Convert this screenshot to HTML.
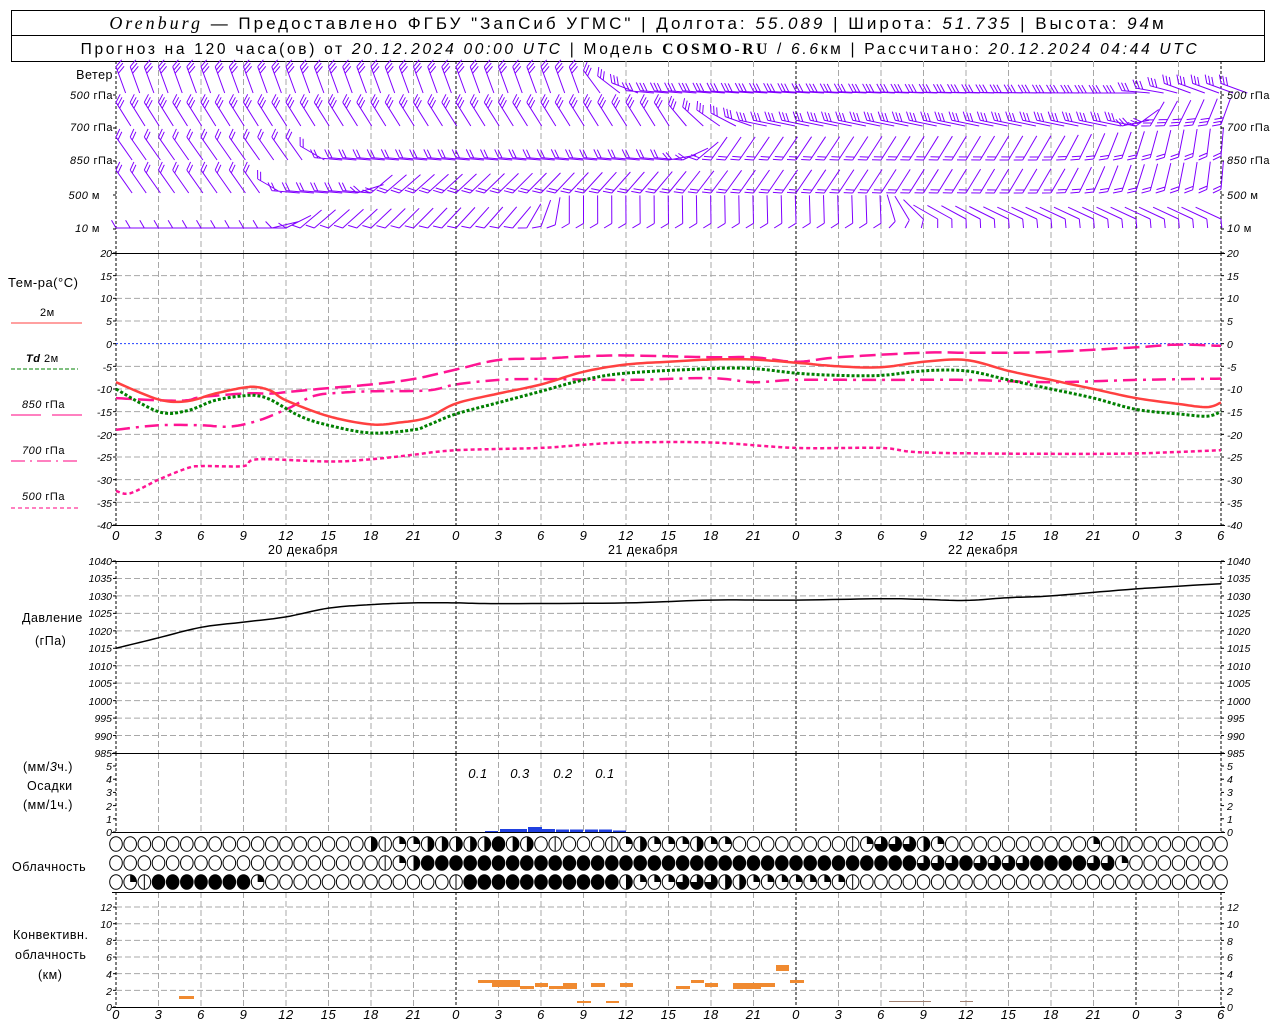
<!DOCTYPE html>
<html><head><meta charset="utf-8">
<style>
html,body{margin:0;padding:0;background:#fff;width:1280px;height:1024px;overflow:hidden}
svg{display:block}
text{font-family:"Liberation Sans","DejaVu Sans",sans-serif;fill:#000}
.t{font-size:12.5px;letter-spacing:0.5px}
.n{font-size:10.5px;font-style:italic}
.ax{font-size:13px;font-style:italic;letter-spacing:0.5px}
.hd{font-size:17px;letter-spacing:3px}
.hd2{font-size:15.5px;letter-spacing:2.7px}
.i{font-style:italic}
</style></head><body>
<svg id="s" width="1280" height="1024" xmlns="http://www.w3.org/2000/svg">
<rect x="0" y="0" width="1280" height="1024" fill="#fff"/>
<rect x="11.5" y="10.5" width="1253" height="51" fill="none" stroke="#000"/>
<line x1="11" y1="35.5" x2="1265" y2="35.5" stroke="#000"/>
<text class="hd" x="638" y="29" text-anchor="middle"><tspan font-family="Liberation Serif" font-style="italic" font-size="18">Orenburg</tspan> — Предоставлено ФГБУ "ЗапСиб УГМС" | Долгота: <tspan class="i">55.089</tspan> | Широта: <tspan class="i">51.735</tspan> | Высота: <tspan class="i">94</tspan>м</text>
<text class="hd2" x="640" y="54" text-anchor="middle">Прогноз на 120 часа(ов) от <tspan class="i">20.12.2024 00:00 UTC</tspan>  | Модель <tspan font-weight="bold" font-family="Liberation Serif">COSMO-RU</tspan> / <tspan class="i">6.6</tspan>км | Рассчитано: <tspan class="i">20.12.2024 04:44 UTC</tspan></text>

<g id="grid"></g>
<g id="data"></g>

<g class="t" text-anchor="end">
<text x="113" y="79">Ветер</text>
<text x="113" y="99" font-size="11"><tspan class="i">500</tspan> гПа</text>
<text x="113" y="131" font-size="11"><tspan class="i">700</tspan> гПа</text>
<text x="113" y="164" font-size="11"><tspan class="i">850</tspan> гПа</text>
<text x="100" y="199" font-size="11"><tspan class="i">500</tspan> м</text>
<text x="100" y="232" font-size="11"><tspan class="i">10</tspan>   м</text>
</g>
<g class="t" font-size="11">
<text x="1227" y="99" font-size="11"><tspan class="i">500</tspan> гПа</text>
<text x="1227" y="131" font-size="11"><tspan class="i">700</tspan> гПа</text>
<text x="1227" y="164" font-size="11"><tspan class="i">850</tspan> гПа</text>
<text x="1227" y="199" font-size="11"><tspan class="i">500</tspan>  м</text>
<text x="1227" y="232" font-size="11"><tspan class="i">10</tspan>   м</text>
</g>

<g class="t">
<text x="8" y="287" font-size="13">Тем-ра(°С)</text>
<text x="40" y="316" font-size="11">2м</text>
<line x1="11" y1="323" x2="82" y2="323" stroke="#ff4040"/>
<text x="26" y="362" font-size="11"><tspan class="i" font-weight="bold">Td</tspan>  2м</text>
<line x1="11" y1="369" x2="78" y2="369" stroke="#008000" stroke-dasharray="4,2"/>
<text x="22" y="408" font-size="11"><tspan class="i">850</tspan>  гПа</text>
<line x1="11" y1="415" x2="41" y2="415" stroke="#ff0080"/><line x1="52" y1="415" x2="82" y2="415" stroke="#ff0080"/>
<text x="22" y="454" font-size="11"><tspan class="i">700</tspan>  гПа</text>
<line x1="11" y1="461" x2="78" y2="461" stroke="#ff0080" stroke-dasharray="14,5,2,5"/>
<text x="22" y="500" font-size="11"><tspan class="i">500</tspan>  гПа</text>
<line x1="11" y1="508" x2="78" y2="508" stroke="#ff0080" stroke-dasharray="4,3"/>
<text x="22" y="622">Давление</text>
<text x="35" y="645">(гПа)</text>
<text x="23" y="771">(мм/<tspan class="i">3</tspan>ч.)</text>
<text x="27" y="790">Осадки</text>
<text x="23" y="809">(мм/1ч.)</text>
<text x="12" y="871">Облачность</text>
<text x="13" y="939">Конвективн.</text>
<text x="15" y="959">облачность</text>
<text x="38" y="979">(км)</text>
</g>

<g class="n" text-anchor="end">
<text x="112" y="257">20</text><text x="112" y="280">15</text><text x="112" y="302">10</text><text x="112" y="325">5</text><text x="112" y="348">0</text>
<text x="112" y="371">-5</text><text x="112" y="393">-10</text><text x="112" y="416">-15</text><text x="112" y="439">-20</text><text x="112" y="461">-25</text><text x="112" y="484">-30</text><text x="112" y="507">-35</text><text x="112" y="529">-40</text>
</g>
<g class="n">
<text x="1227" y="257">20</text><text x="1227" y="280">15</text><text x="1227" y="302">10</text><text x="1227" y="325">5</text><text x="1227" y="348">0</text><text x="1227" y="371">-5</text><text x="1227" y="393">-10</text><text x="1227" y="416">-15</text><text x="1227" y="439">-20</text><text x="1227" y="461">-25</text><text x="1227" y="484">-30</text><text x="1227" y="507">-35</text><text x="1227" y="529">-40</text>
</g>
<g class="n" text-anchor="end" font-size="9.5">
<text x="112" y="565">1040</text><text x="112" y="582">1035</text><text x="112" y="600">1030</text><text x="112" y="617">1025</text><text x="112" y="635">1020</text><text x="112" y="652">1015</text><text x="112" y="670">1010</text><text x="112" y="687">1005</text><text x="112" y="705">1000</text><text x="112" y="722">995</text><text x="112" y="740">990</text><text x="112" y="757">985</text>
<text x="112" y="770">5</text><text x="112" y="783">4</text><text x="112" y="796">3</text><text x="112" y="810">2</text><text x="112" y="823">1</text><text x="112" y="836">0</text>
<text x="112" y="911">12</text><text x="112" y="928">10</text><text x="112" y="945">8</text><text x="112" y="961">6</text><text x="112" y="978">4</text><text x="112" y="995">2</text><text x="112" y="1011">0</text>
</g>
<g class="n" font-size="9.5">
<text x="1227" y="565">1040</text><text x="1227" y="582">1035</text><text x="1227" y="600">1030</text><text x="1227" y="617">1025</text><text x="1227" y="635">1020</text><text x="1227" y="652">1015</text><text x="1227" y="670">1010</text><text x="1227" y="687">1005</text><text x="1227" y="705">1000</text><text x="1227" y="722">995</text><text x="1227" y="740">990</text><text x="1227" y="757">985</text>
<text x="1227" y="770">5</text><text x="1227" y="783">4</text><text x="1227" y="796">3</text><text x="1227" y="810">2</text><text x="1227" y="823">1</text><text x="1227" y="836">0</text>
<text x="1227" y="911">12</text><text x="1227" y="928">10</text><text x="1227" y="945">8</text><text x="1227" y="961">6</text><text x="1227" y="978">4</text><text x="1227" y="995">2</text><text x="1227" y="1011">0</text>
</g>
<g class="ax" text-anchor="middle">
<text x="116" y="540">0</text><text x="158.5" y="540">3</text><text x="201" y="540">6</text><text x="243.5" y="540">9</text><text x="286" y="540">12</text><text x="328.5" y="540">15</text><text x="371" y="540">18</text><text x="413.5" y="540">21</text><text x="456" y="540">0</text><text x="498.5" y="540">3</text><text x="541" y="540">6</text><text x="583.5" y="540">9</text><text x="626" y="540">12</text><text x="668.5" y="540">15</text><text x="711" y="540">18</text><text x="753.5" y="540">21</text><text x="796" y="540">0</text><text x="838.5" y="540">3</text><text x="881" y="540">6</text><text x="923.5" y="540">9</text><text x="966" y="540">12</text><text x="1008.5" y="540">15</text><text x="1051" y="540">18</text><text x="1093.5" y="540">21</text><text x="1136" y="540">0</text><text x="1178.5" y="540">3</text><text x="1221" y="540">6</text>
<text x="116" y="1019">0</text><text x="158.5" y="1019">3</text><text x="201" y="1019">6</text><text x="243.5" y="1019">9</text><text x="286" y="1019">12</text><text x="328.5" y="1019">15</text><text x="371" y="1019">18</text><text x="413.5" y="1019">21</text><text x="456" y="1019">0</text><text x="498.5" y="1019">3</text><text x="541" y="1019">6</text><text x="583.5" y="1019">9</text><text x="626" y="1019">12</text><text x="668.5" y="1019">15</text><text x="711" y="1019">18</text><text x="753.5" y="1019">21</text><text x="796" y="1019">0</text><text x="838.5" y="1019">3</text><text x="881" y="1019">6</text><text x="923.5" y="1019">9</text><text x="966" y="1019">12</text><text x="1008.5" y="1019">15</text><text x="1051" y="1019">18</text><text x="1093.5" y="1019">21</text><text x="1136" y="1019">0</text><text x="1178.5" y="1019">3</text><text x="1221" y="1019">6</text>
</g>
<g class="t" font-size="13" text-anchor="middle">
<text x="303" y="554">20 декабря</text><text x="643" y="554">21 декабря</text><text x="983" y="554">22 декабря</text>
</g>
<g class="ax" text-anchor="middle" font-size="12">
<text x="478" y="778">0.1</text><text x="520" y="778">0.3</text><text x="563" y="778">0.2</text><text x="605" y="778">0.1</text>
</g>
</svg>
<script>
(function(){
var NS="http://www.w3.org/2000/svg";
var G=document.getElementById('grid'),D=document.getElementById('data');
function el(p,tag,a){var e=document.createElementNS(NS,tag);for(var k in a)e.setAttribute(k,a[k]);p.appendChild(e);return e;}
function X(h){return 116+h*1105/78;}
function TY(t){return 253+(20-t)*272/60;}
function PY(p){return 561+(1040-p)*192/55;}
function R(c,n){var s='';for(var i=0;i<n;i++)s+=c;return s;}
var panels=[[61,253],[253,525],[561,753],[753,832],[892,1007]];
for(var t=15;t>=-35;t-=5){if(t==0)continue;el(G,'line',{x1:116,x2:1221,y1:TY(t),y2:TY(t),stroke:'#a8a8a8','stroke-dasharray':'6,3'});}
for(var p=1035;p>=990;p-=5)el(G,'line',{x1:116,x2:1221,y1:PY(p),y2:PY(p),stroke:'#a8a8a8','stroke-dasharray':'6,3'});
for(var c=2;c<=12;c+=2){var y=1007-c*8.33;el(G,'line',{x1:116,x2:1221,y1:y,y2:y,stroke:'#a8a8a8','stroke-dasharray':'6,3'});}
for(var h=0;h<=78;h+=3){var x=X(h),day=(h%24==0)||h==78;
 panels.forEach(function(pp){el(G,'line',{x1:x,x2:x,y1:pp[0],y2:pp[1],stroke:day?'#000':'#a8a8a8','stroke-dasharray':day?'3,2':'6,3'});});}
[[253],[525],[561],[753],[832],[892],[1007]].forEach(function(a){el(G,'line',{x1:112,x2:1225,y1:a[0]+0.5,y2:a[0]+0.5,stroke:'#000'});});
el(G,'line',{x1:116,x2:1221,y1:TY(0),y2:TY(0),stroke:'#2040ff','stroke-dasharray':'2,2'});
function ticks(ys){ys.forEach(function(y){el(G,'line',{x1:113,x2:116,y1:y,y2:y,stroke:'#000'});el(G,'line',{x1:1221,x2:1224,y1:y,y2:y,stroke:'#000'});});}
var ty=[];for(var t=20;t>=-40;t-=5)ty.push(TY(t));ticks(ty);
ty=[];for(var p=1040;p>=985;p-=5)ty.push(PY(p));ticks(ty);
ty=[];for(var v=0;v<=5;v++)ty.push(832-v*13.2);ticks(ty);
ty=[];for(var v=0;v<=12;v+=2)ty.push(1007-v*8.33);ticks(ty);
ticks([95,128,161,195,229]);

function interp(kf,step){var pts=[];for(var i=0;i<kf.length-1;i++){var a=kf[i],b=kf[i+1];
 var p0=kf[Math.max(0,i-1)],p3=kf[Math.min(kf.length-1,i+2)];
 for(var s=0;s<1;s+=step){var t=s,t2=t*t,t3=t2*t;
  var f=function(k){return 0.5*((2*a[k])+(-p0[k]+b[k])*t+(2*p0[k]-5*a[k]+4*b[k]-p3[k])*t2+(-p0[k]+3*a[k]-3*b[k]+p3[k])*t3);};
  pts.push([f(0),f(1)]);}}
 pts.push(kf[kf.length-1]);return pts;}
function curve(kf,fy,attrs){var pts=interp(kf,0.1);var d='';pts.forEach(function(q,i){d+=(i?'L':'M')+X(q[0]).toFixed(1)+','+fy(q[1]).toFixed(1);});
 attrs.d=d;attrs.fill='none';el(D,'path',attrs);}
var T2=[[0,-8.5],[3,-12.3],[5,-12.7],[7,-11],[9,-9.7],[10,-9.6],[11,-10.5],[12,-12.5],[15,-16],[18,-17.8],[20,-17.4],[22,-16.3],[24,-13.2],[27,-11],[30,-9],[33,-6.2],[36,-4.6],[39,-4],[42,-3.5],[45,-3.5],[48,-4.2],[51,-5],[54,-5.2],[57,-4],[60,-3.6],[63,-6],[66,-8],[69,-10],[72,-12],[75,-13.3],[77,-14],[78,-13]];
var TD=[[0,-10],[3,-15],[5,-14.8],[7,-12.5],[9,-11.5],[10,-11.5],[11,-12.5],[13,-16],[15,-18],[18,-19.7],[21,-19],[22,-18],[24,-15.5],[27,-13],[30,-10.5],[33,-8],[36,-6.5],[42,-5.5],[45,-5.5],[48,-6.5],[51,-7],[54,-7],[57,-6],[60,-6],[63,-8],[66,-10],[69,-12],[72,-14.5],[75,-15.5],[77,-16],[78,-15]];
var T850=[[0,-12],[3,-12.5],[5,-12.5],[6,-11.8],[9,-11],[11,-11],[12,-10.7],[15,-9.8],[18,-9],[21,-7.8],[24,-5.7],[27,-3.6],[30,-3.3],[33,-2.8],[36,-2.6],[42,-3],[45,-3],[48,-4],[51,-3],[57,-2],[60,-2],[63,-2],[66,-1.8],[72,-0.8],[75,-0.2],[78,-0.5]];
var T700=[[0,-19],[3,-18],[6,-18],[8,-18.3],[10,-17],[12,-14.5],[14,-11.5],[16,-10.8],[18,-10.5],[22,-10.3],[24,-9],[27,-8],[30,-7.8],[36,-8],[42,-7.6],[45,-8.5],[48,-8],[54,-8],[60,-8],[66,-8.5],[72,-8],[78,-7.7]];
var T500=[[0,-32.5],[1,-33],[3,-30],[5,-27.5],[6,-27],[9,-27],[10,-25.5],[15,-26],[18,-25.5],[21,-24.5],[24,-23.5],[30,-23],[33,-22.3],[36,-21.8],[42,-21.8],[48,-23],[54,-23],[57,-24],[66,-24.3],[72,-24.2],[78,-23.5]];
curve(T500,TY,{stroke:'#ff1493','stroke-width':2.5,'stroke-dasharray':'4,3'});
curve(T700,TY,{stroke:'#ff1493','stroke-width':2.5,'stroke-dasharray':'14,6,3,6'});
curve(T850,TY,{stroke:'#ff1493','stroke-width':2.5,'stroke-dasharray':'16,6'});
curve(TD,TY,{stroke:'#008000','stroke-width':3,'stroke-dasharray':'3,2'});
curve(T2,TY,{stroke:'#ff4040','stroke-width':2.5});
var PR=[[0,1015],[3,1018],[6,1021],[9,1022.5],[12,1024],[15,1026.5],[18,1027.5],[21,1028],[24,1028],[27,1027.8],[36,1028],[42,1028.8],[48,1028.8],[54,1029.2],[57,1029],[60,1028.7],[63,1029.5],[66,1030],[72,1032],[78,1033.5]];
curve(PR,PY,{stroke:'#000','stroke-width':1.5});
[[485,498,831],[500,513,829],[513,527,829],[528,542,827],[542,555,829],[556,569,829.5],[570,583,829.5],[585,598,829.5],[599,612,829.5],[613,626,830.5]].forEach(function(b){el(D,'rect',{x:b[0],y:b[2],width:b[1]-b[0],height:832-b[2],fill:'#2040e0'});});
[[478,492,980,983],[492,520,980,987],[520,534,986,989],[535,548,983,987],[549,563,986,989],[563,577,983,989],[577,591,1001,1003],[591,605,983,987],[606,619,1001,1003],[620,633,983,987],[676,690,986,989],[691,704,980,983],[705,718,983,987],[733,761,983,989],[761,775,983,987],[776,789,965,971],[790,804,980,983],[179,194,996,999]].forEach(function(b){el(D,'rect',{x:b[0],y:b[2],width:b[1]-b[0],height:b[3]-b[2],fill:'#f08a30'});});
el(D,'line',{x1:889,x2:931,y1:1001.5,y2:1001.5,stroke:'#a08070'});el(D,'line',{x1:960,x2:973,y1:1001.5,y2:1001.5,stroke:'#a08070'});
var rows=[
R('o',18)+'hlqq'+R('h',5)+'fhhol'+'ooo'+'lqhqqqhqq'+R('o',8)+'lqttthq'+R('o',10)+'qol'+R('o',7),
R('o',19)+'lqh'+R('f',35)+'tttf'+'tttt'+'ffff'+'ttq'+R('o',7),
'oql'+R('f',7)+'q'+R('o',13)+'l'+R('f',11)+'hqqqttthh'+R('q',7)+'l'+R('o',26)];
var ry=[844,863,882];
rows.forEach(function(r,ri){for(var i=0;i<79;i++){var ch=r[i]||'o',cx=X(i),cy=ry[ri],rx=6.3,rv=7.3;
 el(D,'ellipse',{cx:cx,cy:cy,rx:rx,ry:rv,fill:ch=='f'?'#000':'#fff',stroke:'#000'});
 var d=null;
 if(ch=='h')d='M'+cx+','+(cy-rv)+'A'+rx+','+rv+' 0 0 1 '+cx+','+(cy+rv)+'Z';
 if(ch=='q')d='M'+cx+','+cy+'L'+cx+','+(cy-rv)+'A'+rx+','+rv+' 0 0 1 '+(cx+rx)+','+cy+'Z';
 if(ch=='t')d='M'+cx+','+cy+'L'+(cx-rx)+','+cy+'A'+rx+','+rv+' 0 1 0 '+cx+','+(cy-rv)+'Z';
 if(d)el(D,'path',{d:d,fill:'#000'});
 if(ch=='l')el(D,'line',{x1:cx,x2:cx,y1:cy-rv,y2:cy+rv,stroke:'#000'});
}});
function kfv(kf,h){for(var i=0;i<kf.length-1;i++){if(h<=kf[i+1][0]){var a=kf[i],b=kf[i+1],t=(h-a[0])/(b[0]-a[0]||1);return a[1]+(b[1]-a[1])*t;}}return kf[kf.length-1][1];}
var W=[
 {y:93,n:3,a:[[0,70],[32,70],[36,5],[70,0],[74,20],[78,20]]},
 {y:126,n:3,a:[[0,58],[38,58],[44,12],[70,12],[73,-60],[78,-70]]},
 {y:160,n:2,a:[[0,55],[12,55],[14,5],[38,5],[42,-55],[66,-60],[78,-85]]},
 {y:193,n:2,a:[[0,55],[9,55],[11,5],[16,5],[18,-40],[38,-50],[44,-55],[66,-60],[78,-85]]},
 {y:228,n:1,a:[[0,0],[10,0],[13,-40],[28,-50],[32,-90],[54,-92],[58,-150],[64,-155],[78,-155]]}];
var pd='';
W.forEach(function(w){for(var h=0;h<=78;h++){var ang=kfv(w.a,h)*Math.PI/180,L=28;
 var ux=Math.cos(ang),uy=Math.sin(ang);
 var fa=ang-2.1,fx=Math.cos(fa)*9,fy=Math.sin(fa)*9;
 var segs=[[0,0,ux*L,uy*L]];
 for(var k=0;k<w.n;k++){var sx=ux*k*3.5,sy=uy*k*3.5;segs.push([sx,sy,sx+fx,sy+fy]);}
 var maxy=-1e9;segs.forEach(function(s){maxy=Math.max(maxy,s[1],s[3]);});
 var ox=X(h),oy=w.y-maxy;
 segs.forEach(function(s){pd+='M'+(ox+s[0]).toFixed(1)+','+(oy+s[1]).toFixed(1)+'L'+(ox+s[2]).toFixed(1)+','+(oy+s[3]).toFixed(1);});
}});
el(D,'path',{d:pd,stroke:'#8000ff','stroke-width':1,fill:'none'});
})();
</script>
</body></html>
